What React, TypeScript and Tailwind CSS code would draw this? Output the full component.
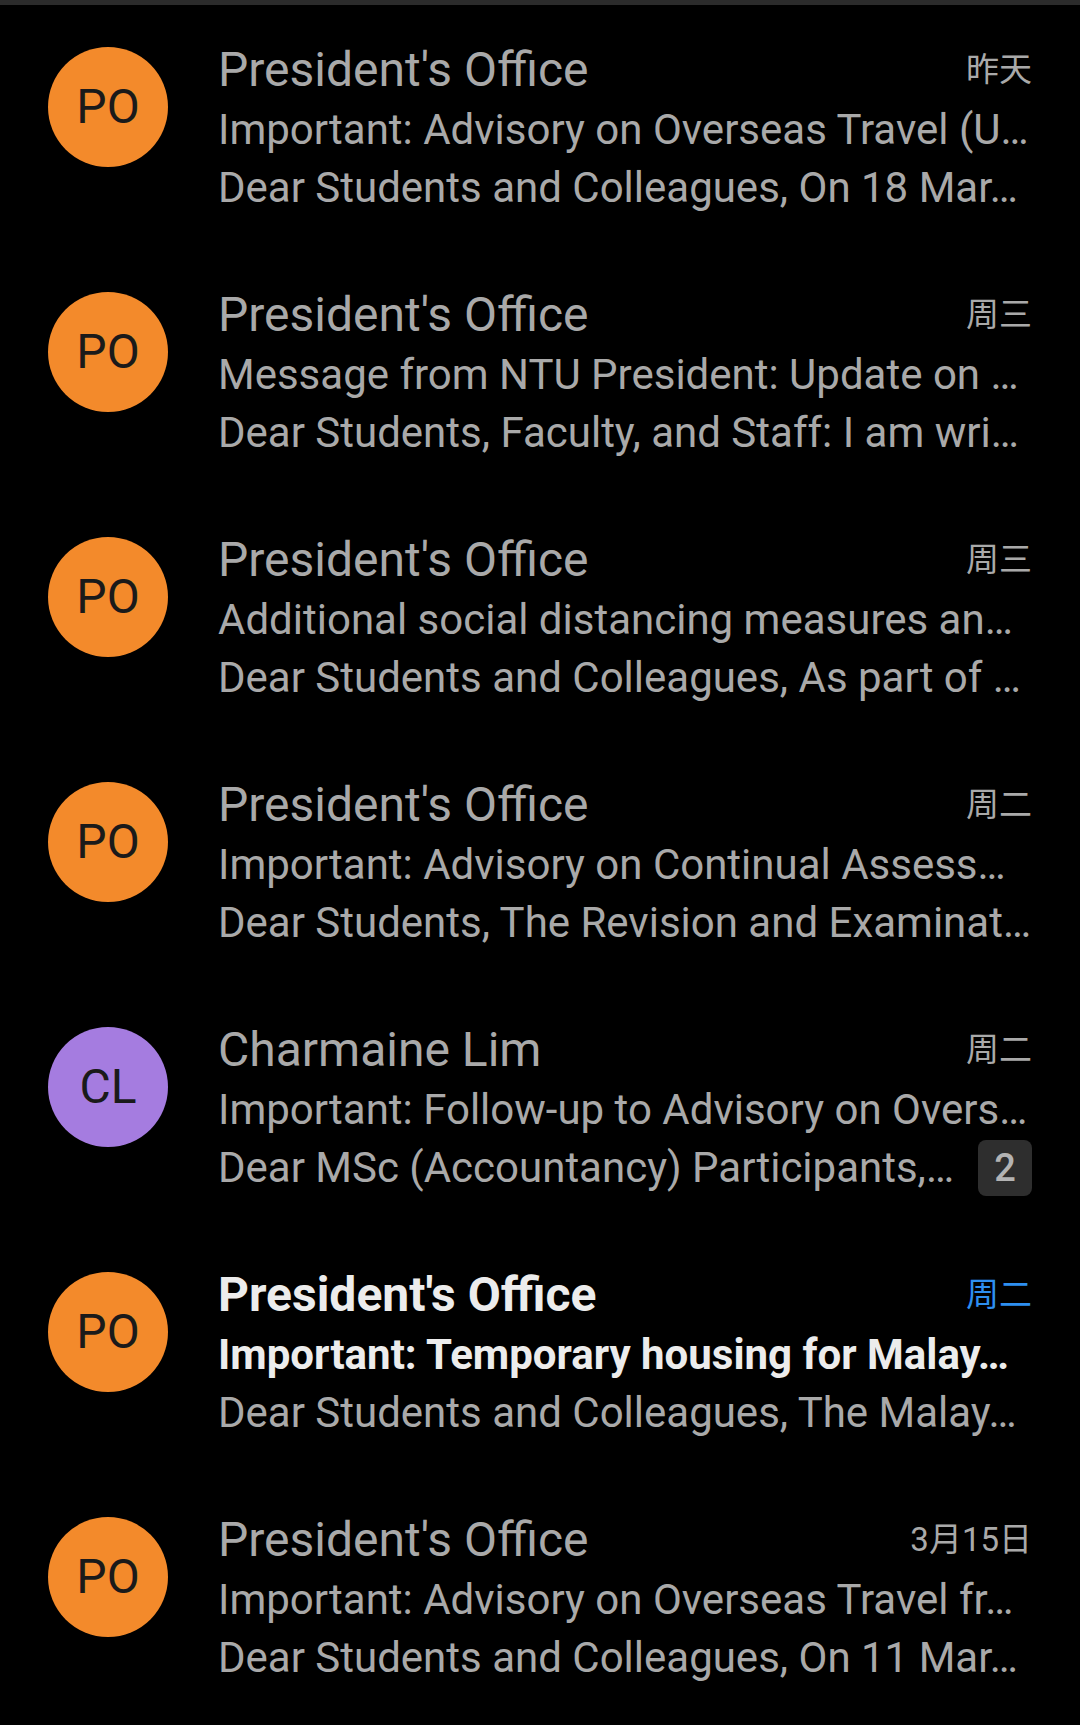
import React from "react";

type Mail = {
  initials: string;
  avatar: string;
  sender: string;
  date: string;
  subject: string;
  preview: string;
  unread?: boolean;
  count?: number;
};

const mails: Mail[] = [
  {
    initials: "PO",
    avatar: "bg-[#f38a2b]",
    sender: "President's Office",
    date: "昨天",
    subject: "Important: Advisory on Overseas Travel (U…",
    preview: "Dear Students and Colleagues, On 18 Mar…",
  },
  {
    initials: "PO",
    avatar: "bg-[#f38a2b]",
    sender: "President's Office",
    date: "周三",
    subject: "Message from NTU President: Update on …",
    preview: "Dear Students, Faculty, and Staff: I am writ…",
  },
  {
    initials: "PO",
    avatar: "bg-[#f38a2b]",
    sender: "President's Office",
    date: "周三",
    subject: "Additional social distancing measures an…",
    preview: "Dear Students and Colleagues, As part of …",
  },
  {
    initials: "PO",
    avatar: "bg-[#f38a2b]",
    sender: "President's Office",
    date: "周二",
    subject: "Important: Advisory on Continual Assess…",
    preview: "Dear Students, The Revision and Examinat…",
  },
  {
    initials: "CL",
    avatar: "bg-[#a57ce0]",
    sender: "Charmaine Lim",
    date: "周二",
    subject: "Important: Follow-up to Advisory on Overs…",
    preview: "Dear MSc (Accountancy) Participants,…",
    count: 2,
  },
  {
    initials: "PO",
    avatar: "bg-[#f38a2b]",
    sender: "President's Office",
    date: "周二",
    subject: "Important: Temporary housing for Malay…",
    preview: "Dear Students and Colleagues, The Malay…",
    unread: true,
  },
  {
    initials: "PO",
    avatar: "bg-[#f38a2b]",
    sender: "President's Office",
    date: "3月15日",
    subject: "Important: Advisory on Overseas Travel fr…",
    preview: "Dear Students and Colleagues, On 11 Mar…",
  },
];

function MailRow({ mail }: { mail: Mail }) {
  return (
    <div className="flex h-[245px] items-start px-[48px] pt-[42px]">
      <div
        className={`flex h-[120px] w-[120px] shrink-0 items-center justify-center rounded-full ${mail.avatar} text-[48px] text-[#1a1a1a]`}
      >
        {mail.initials}
      </div>
      <div className="ml-[50px] min-w-0 flex-1 -mt-[9px]">
        <div className="flex h-[64px] items-center justify-between">
          <span
            className={`truncate text-[48px] ${
              mail.unread ? "font-bold text-[#ececec]" : "text-[#a9a9a9]"
            }`}
          >
            {mail.sender}
          </span>
          <span
            className={`ml-4 shrink-0 text-[33px] ${
              mail.unread ? "text-[#2e8ff0]" : "text-[#a9a9a9]"
            }`}
          >
            {mail.date}
          </span>
        </div>
        <p
          className={`truncate text-[42px] leading-[56px] ${
            mail.unread ? "font-bold text-[#ececec]" : "text-[#a9a9a9]"
          }`}
        >
          {mail.subject}
        </p>
        <div className="mt-[2px] flex h-[56px] items-center justify-between">
          <span className="truncate text-[42px] leading-[56px] text-[#a9a9a9]">
            {mail.preview}
          </span>
          {mail.count && (
            <span className="ml-4 flex h-[56px] w-[54px] shrink-0 items-center justify-center rounded-[8px] bg-[#2e2e2e] text-[38px] font-medium text-[#b3b3b3]">
              {mail.count}
            </span>
          )}
        </div>
      </div>
    </div>
  );
}

export default function App() {
  return (
    <div
      className="min-h-[1725px] w-[1080px] bg-black"
      style={{ fontFamily: 'Roboto, "Noto Sans CJK SC", sans-serif' }}
    >
      <div className="h-[5px] bg-[#2b2b2b]" />
      {mails.map((mail, i) => (
        <MailRow key={i} mail={mail} />
      ))}
    </div>
  );
}
